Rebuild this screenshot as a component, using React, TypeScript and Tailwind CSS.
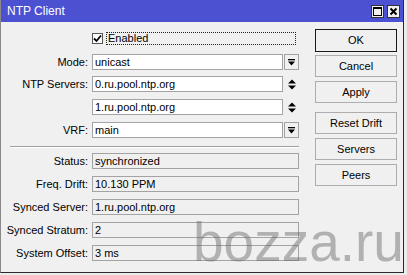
import React from "react";

const DropIcon = () => (
  <svg width="7" height="7" viewBox="0 0 7 7">
    <rect x="0" y="0" width="7" height="1.3" fill="#000" />
    <polygon points="0,2.5 7,2.5 3.5,6.5" fill="#000" />
  </svg>
);

const UpDownIcon = () => (
  <svg width="8" height="11" viewBox="0 0 8 11">
    <polygon points="0,4.5 8,4.5 4,0.5" fill="#000" />
    <polygon points="0,6.5 8,6.5 4,10.5" fill="#000" />
  </svg>
);

const Label = ({ children }: { children: React.ReactNode }) => (
  <div className="w-[87px] text-right leading-[16px] whitespace-nowrap">{children}</div>
);

const EditRow = ({
  label,
  value,
  kind,
  className,
}: {
  label?: string;
  value: string;
  kind: "drop" | "updown";
  className?: string;
}) => (
  <div className={"flex items-center h-[16px] " + (className ?? "")}>
    <Label>{label ?? ""}</Label>
    <div className="ml-[4px] w-[191px] h-[16px] bg-white border border-[#a3a3a3] pl-[2px] leading-[14px] whitespace-nowrap">
      {value}
    </div>
    {kind === "drop" ? (
      <div className="ml-[1px] w-[15px] h-[16px] border border-[#a3a3a3] bg-[#f0f0f0] flex items-center justify-center">
        <DropIcon />
      </div>
    ) : (
      <div className="ml-[1px] w-[15px] h-[16px] flex items-center justify-center">
        <UpDownIcon />
      </div>
    )}
  </div>
);

const ReadRow = ({ label, value, className }: { label: string; value: string; className?: string }) => (
  <div className={"flex items-center h-[16px] " + (className ?? "")}>
    <Label>{label}</Label>
    <div className="ml-[4px] w-[207px] h-[16px] border border-[#a3a3a3] pl-[2px] leading-[14px] whitespace-nowrap">
      {value}
    </div>
  </div>
);

const Btn = ({ children, primary, className }: { children: React.ReactNode; primary?: boolean; className?: string }) => (
  <div
    className={
      "w-[82px] flex items-center justify-center bg-[#f0f0f0] border " +
      (primary ? "h-[23px] border-[#1a1a1a]" : "h-[22px] border-[#adadad]") +
      " " +
      (className ?? "")
    }
  >
    {children}
  </div>
);

export default function App() {
  return (
    <div
      className="relative w-[407px] h-[275px] bg-[#ececec] text-[11px] text-black overflow-hidden"
      style={{ fontFamily: '"Liberation Sans", Arial, sans-serif' }}
    >
      <div className="w-[404px] h-[273px] flex flex-col border-l border-[#8a8a8a] border-r border-b border-r-[#2a2a2a] border-b-[#2a2a2a]">
        <div className="h-[22px] bg-[#4c51d1] flex items-center justify-between pl-[6px] pr-[3px]">
          <span className="text-white text-[12px] leading-none">NTP Client</span>
          <div className="flex gap-[3px] items-center">
            <div className="w-[13px] h-[13px] bg-[#f0f0f0] border border-[#333] flex items-center justify-center">
              <div className="w-[9px] h-[9px] border border-black border-t-2" />
            </div>
            <div className="w-[13px] h-[13px] bg-[#f0f0f0] border border-[#333] flex items-center justify-center">
              <svg width="9" height="9" viewBox="0 0 9 9">
                <path d="M1.5 1.5 L7.5 7.5 M7.5 1.5 L1.5 7.5" stroke="#000" strokeWidth="2" />
              </svg>
            </div>
          </div>
        </div>
        <div className="flex-1 flex bg-[#f0f0f0]">
          <div className="w-[300px] flex flex-col">
            <div className="mt-[10px] h-[13px] flex items-center">
              <div className="ml-[91px] w-[11px] h-[11px] bg-white border border-[#555] flex items-center justify-center">
                <svg width="9" height="9" viewBox="0 0 9 9">
                  <path d="M1 4.5 L3.5 7 L8 1.5" stroke="#000" strokeWidth="1.8" fill="none" />
                </svg>
              </div>
              <div className="ml-[3px] w-[190px] h-[13px] border border-dotted border-[#222] pl-[1px] leading-[11px]">
                Enabled
              </div>
            </div>
            <EditRow className="mt-[9px]" label="Mode:" value="unicast" kind="drop" />
            <EditRow className="mt-[6px]" label="NTP Servers:" value="0.ru.pool.ntp.org" kind="updown" />
            <EditRow className="mt-[7px]" value="1.ru.pool.ntp.org" kind="updown" />
            <EditRow className="mt-[7px]" label="VRF:" value="main" kind="drop" />
            <div className="mt-[8px] ml-[9px] w-[289px] h-[1px] bg-[#a0a0a0]" />
            <div className="w-[289px] ml-[9px] h-[1px] bg-white" />
            <ReadRow className="mt-[5px]" label="Status:" value="synchronized" />
            <ReadRow className="mt-[7px]" label="Freq. Drift:" value="10.130 PPM" />
            <ReadRow className="mt-[7px]" label="Synced Server:" value="1.ru.pool.ntp.org" />
            <ReadRow className="mt-[7px]" label="Synced Stratum:" value="2" />
            <ReadRow className="mt-[7px]" label="System Offset:" value="3 ms" />
          </div>
          <div className="flex flex-col pl-[14px] pt-[7px]">
            <Btn primary>OK</Btn>
            <Btn className="mt-[3px]">Cancel</Btn>
            <Btn className="mt-[4px]">Apply</Btn>
            <Btn className="mt-[9px]">Reset Drift</Btn>
            <Btn className="mt-[4px]">Servers</Btn>
            <Btn className="mt-[4px]">Peers</Btn>
          </div>
        </div>
      </div>
      <div
        className="absolute left-[193px] top-[215px] text-[55px] leading-none pointer-events-none whitespace-nowrap text-[rgba(100,100,100,0.45)]"
        style={{ fontFamily: '"Liberation Sans", Arial, sans-serif' }}
      >
        bozza.ru
      </div>
    </div>
  );
}
